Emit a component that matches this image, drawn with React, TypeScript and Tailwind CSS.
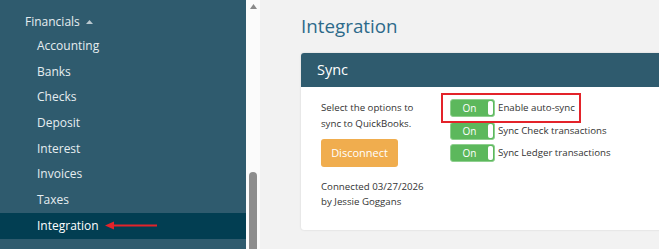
import React from "react";

const items = ["Accounting", "Banks", "Checks", "Deposit", "Interest", "Invoices", "Taxes", "Integration"];

function Toggle() {
  return (
    <div className="flex h-[18px] w-[45px] items-center rounded-[3px] border border-[#8fd08f] bg-[#5cb85c]">
      <span className="flex-1 text-center text-[10px] leading-none text-white">On</span>
      <span className="mr-[1px] h-[14px] w-[5px] rounded-[2px] bg-white" />
    </div>
  );
}

export default function App() {
  return (
    <div className="flex h-[249px] w-[659px] overflow-hidden bg-[#f2f2f2] font-['Open_Sans',sans-serif]">
      <aside className="h-full w-[246px] shrink-0 bg-[#2f5b6e] pt-[11px] text-[12px] text-[#e6edf0]">
        <div className="flex h-[22px] items-center gap-[6px] pl-[25px]">
          <span>Financials</span>
          <svg width="7" height="4" viewBox="0 0 7 4" className="mt-[-1px]">
            <path d="M0 4 L3.5 0 L7 4 Z" fill="#b9c8cf" />
          </svg>
        </div>
        {items.map((it) => (
          <div
            key={it}
            className={`relative flex h-[25.7px] items-center pl-[37px] ${it === "Integration" ? "bg-[#023e52] text-white" : ""}`}
          >
            <span>{it}</span>
            {it === "Integration" && (
              <svg className="absolute left-[105px] top-[8px]" width="52" height="9" viewBox="0 0 52 9">
                <path d="M0 4.5 L9 0.5 L9 8.5 Z" fill="#e3232a" />
                <rect x="8" y="3.5" width="44" height="2" fill="#e3232a" />
              </svg>
            )}
          </div>
        ))}
      </aside>
      <div className="relative h-full w-[14px] shrink-0 bg-[#fbfbfb]">
        <svg className="absolute left-[4px] top-[4px]" width="7" height="5" viewBox="0 0 7 5">
          <path d="M0 5 L3.5 0 L7 5 Z" fill="#8a8a8a" />
        </svg>
        <div className="absolute left-[3px] top-[172px] h-[90px] w-[8px] rounded-t-[4px] bg-[#8e8e8e]" />
      </div>
      <main className="flex-1 pl-[41px]">
        <h1 className="mt-[11px] h-[32px] text-[18.8px] leading-[30px] font-normal text-[#2d6a8a]">Integration</h1>
        <div className="mt-[10px] w-[420px] rounded-[3px] bg-white shadow-[0_0_2px_rgba(0,0,0,0.15)]">
          <div className="flex h-[34px] items-center rounded-t-[3px] bg-[#2f5b6e] pl-[16px] text-[14.5px] text-white">Sync</div>
          <div className="relative flex h-[143px] pl-[20px] pt-[13px] text-[9.7px] leading-[16px] text-[#333]">
            <div className="w-[129px]">
              <p>Select the options to</p>
              <p>sync to QuickBooks.</p>
              <button className="mt-[7px] h-[28px] w-[77px] rounded-[3px] bg-[#f0ad4e] text-[11px] text-white">Disconnect</button>
              <p className="mt-[12px] leading-[15px]">Connected 03/27/2026</p>
              <p className="leading-[15px]">by Jessie Goggans</p>
            </div>
            <div className="mt-[-1px] flex flex-col gap-[4.5px]">
              <div className="flex items-center gap-[3px]"><Toggle /><span>Enable auto-sync</span></div>
              <div className="flex items-center gap-[3px]"><Toggle /><span>Sync Check transactions</span></div>
              <div className="flex items-center gap-[3px]"><Toggle /><span>Sync Ledger transactions</span></div>
            </div>
            <div className="pointer-events-none absolute left-[140px] top-[6px] h-[30px] w-[140px] border-2 border-[#e3232a]" />
          </div>
        </div>
      </main>
    </div>
  );
}
